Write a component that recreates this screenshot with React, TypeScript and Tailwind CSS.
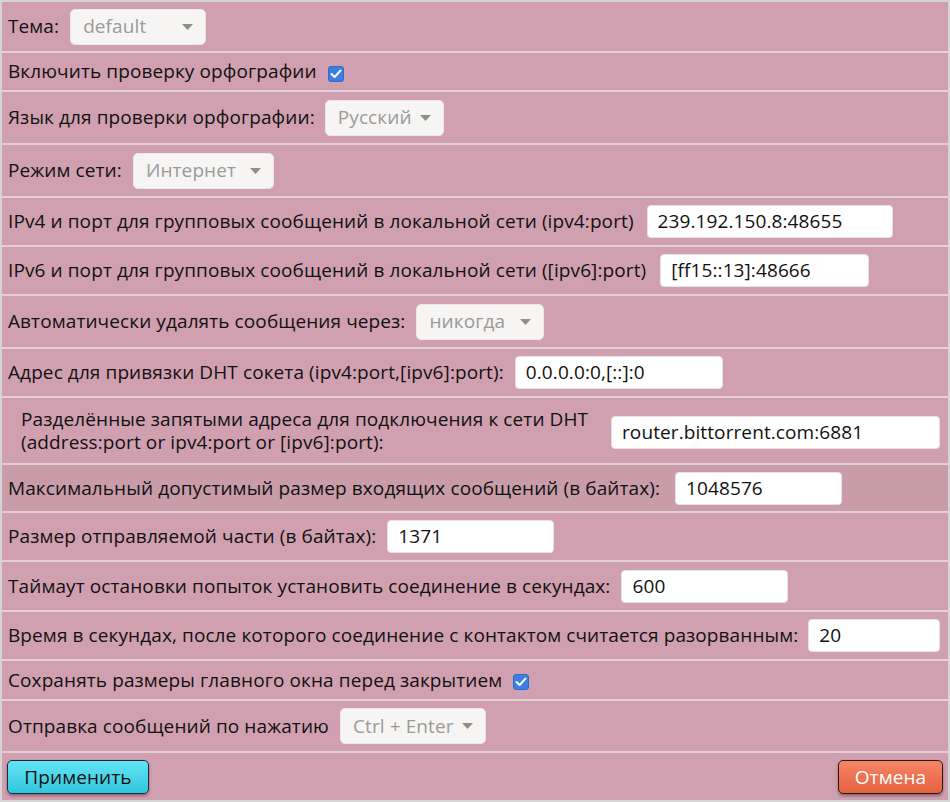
import React from "react";

const Caret = () => (
  <svg width="11" height="6" viewBox="0 0 11 6" className="ml-auto shrink-0">
    <path d="M0 0 L11 0 L5.5 6 Z" fill="#8f8f8f" />
  </svg>
);

const Select = ({ value, w }: { value: string; w: string }) => (
  <div
    className={`flex items-center gap-[8px] h-[36px] rounded-[5px] bg-[#f6f5f4] border border-[#ebe7e7] pl-[12px] pr-[12px] text-[#9a9a9a] whitespace-nowrap ${w}`}
  >
    <span>{value}</span>
    <Caret />
  </div>
);

const Input = ({ value, w }: { value: string; w: string }) => (
  <div
    className={`flex items-center h-[33px] rounded-[4px] bg-white border border-[#e9e0e3] pl-[10px] text-[#111] ${w}`}
  >
    {value}
  </div>
);

const Check = () => (
  <span className="inline-flex items-center justify-center w-[16px] h-[16px] rounded-[3px] bg-[#3d7fe0] border border-[#2f6cc8]">
    <svg width="12" height="10" viewBox="0 0 12 10">
      <path d="M1.5 5 L4.6 8 L10.5 1.6" stroke="white" strokeWidth="2" fill="none" strokeLinecap="round" strokeLinejoin="round" />
    </svg>
  </span>
);

const Row = ({
  h,
  children,
  className = "",
}: {
  h: string;
  children: React.ReactNode;
  className?: string;
}) => (
  <div className={`flex items-center border-b-2 border-[#e3d0d6] ${h} ${className}`}>{children}</div>
);

export default function App() {
  return (
    <div
      className="w-[950px] h-[802px] border-2 border-[#d4d4d4] bg-[#d0a0b0] text-[19px] tracking-[0.1px] text-[#111] flex flex-col"
      style={{ fontFamily: '"Open Sans", "Noto Sans", sans-serif' }}
    >
      <Row h="h-[51px]" className="pl-[6px]">
        <span>Тема:</span>
        <div className="ml-[11px]">
          <Select value="default" w="w-[136px]" />
        </div>
      </Row>
      <Row h="h-[39px]" className="pl-[6px]">
        <span>Включить проверку орфографии</span>
        <span className="ml-[11px] mt-[1px]">
          <Check />
        </span>
      </Row>
      <Row h="h-[53px]" className="pl-[6px]">
        <span>Язык для проверки орфографии:</span>
        <div className="ml-[10px]">
          <Select value="Русский" w="w-auto" />
        </div>
      </Row>
      <Row h="h-[53px]" className="pl-[6px]">
        <span>Режим сети:</span>
        <div className="ml-[11px]">
          <Select value="Интернет" w="w-[141px]" />
        </div>
      </Row>
      <Row h="h-[49px]" className="pl-[6px]">
        <span>IPv4 и порт для групповых сообщений в локальной сети (ipv4:port)</span>
        <div className="ml-[13px]">
          <Input value="239.192.150.8:48655" w="w-[246px]" />
        </div>
      </Row>
      <Row h="h-[49px]" className="pl-[6px]">
        <span>IPv6 и порт для групповых сообщений в локальной сети ([ipv6]:port)</span>
        <div className="ml-[14px]">
          <Input value="[ff15::13]:48666" w="w-[209px]" />
        </div>
      </Row>
      <Row h="h-[53px]" className="pl-[6px]">
        <span>Автоматически удалять сообщения через:</span>
        <div className="ml-[11px]">
          <Select value="никогда" w="w-[128px]" />
        </div>
      </Row>
      <Row h="h-[49px]" className="pl-[6px]">
        <span>Адрес для привязки DHT сокета (ipv4:port,[ipv6]:port):</span>
        <div className="ml-[11px]">
          <Input value="0.0.0.0:0,[::]:0" w="w-[208px]" />
        </div>
      </Row>
      <Row h="h-[67px]" className="pl-[19px]">
        <span className="leading-[23px] w-[585px]">
          Разделённые запятыми адреса для подключения к сети DHT (address:port or ipv4:port or [ipv6]:port):
        </span>
        <div className="ml-auto mr-[8px] mt-[4px]">
          <Input value="router.bittorrent.com:6881" w="w-[329px]" />
        </div>
      </Row>
      <Row h="h-[48px]" className="pl-[6px] bg-[#c89ca9]">
        <span>Максимальный допустимый размер входящих сообщений (в байтах):</span>
        <div className="ml-[15px]">
          <Input value="1048576" w="w-[167px]" />
        </div>
      </Row>
      <Row h="h-[49px]" className="pl-[6px]">
        <span>Размер отправляемой части (в байтах):</span>
        <div className="ml-[11px]">
          <Input value="1371" w="w-[167px]" />
        </div>
      </Row>
      <Row h="h-[50px]" className="pl-[6px]">
        <span>Таймаут остановки попыток установить соединение в секундах:</span>
        <div className="ml-[11px]">
          <Input value="600" w="w-[167px]" />
        </div>
      </Row>
      <Row h="h-[49px]" className="pl-[6px]">
        <span className="whitespace-nowrap">
          Время в секундах, после которого соединение с контактом считается разорванным:
        </span>
        <div className="ml-[10px] flex-1 mr-[8px]">
          <Input value="20" w="w-full" />
        </div>
      </Row>
      <Row h="h-[40px]" className="pl-[6px]">
        <span>Сохранять размеры главного окна перед закрытием</span>
        <span className="ml-[11px] mt-[1px]">
          <Check />
        </span>
      </Row>
      <Row h="h-[52px]" className="pl-[6px]">
        <span>Отправка сообщений по нажатию</span>
        <div className="ml-[11px]">
          <Select value="Ctrl + Enter" w="w-auto" />
        </div>
      </Row>
      <div className="flex-1 flex items-center justify-between px-[5px] pt-[1px]">
        <button className="h-[34px] w-[142px] rounded-[5px] border border-[#1e2a2e] bg-gradient-to-b from-[#62e4f4] to-[#2ec6de] text-[#111] shadow-[0_2px_3px_rgba(0,0,0,0.35)] flex items-center justify-center">
          Применить
        </button>
        <button className="h-[34px] w-[105px] rounded-[5px] border border-[#2a1a16] bg-gradient-to-b from-[#f58566] to-[#e5603f] text-white shadow-[0_2px_3px_rgba(0,0,0,0.35)] flex items-center justify-center">
          Отмена
        </button>
      </div>
    </div>
  );
}
